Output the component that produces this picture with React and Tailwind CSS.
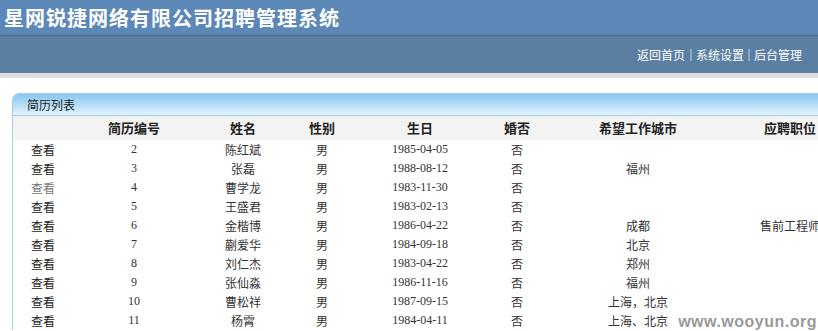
import React from 'react'

const rows = [
  ['2', '陈红斌', '男', '1985-04-05', '否', '', ''],
  ['3', '张磊', '男', '1988-08-12', '否', '福州', ''],
  ['4', '曹学龙', '男', '1983-11-30', '否', '', ''],
  ['5', '王盛君', '男', '1983-02-13', '否', '', ''],
  ['6', '金楷博', '男', '1986-04-22', '否', '成都', '售前工程师'],
  ['7', '蒯爱华', '男', '1984-09-18', '否', '北京', ''],
  ['8', '刘仁杰', '男', '1983-04-22', '否', '郑州', ''],
  ['9', '张仙淼', '男', '1986-11-16', '否', '福州', ''],
  ['10', '曹松祥', '男', '1987-09-15', '否', '上海，北京', ''],
  ['11', '杨霄', '男', '1984-04-11', '否', '上海、北京', ''],
]

const cjk = { fontFamily: '"Noto Sans CJK SC", "Noto Sans", sans-serif' }
const serif = { fontFamily: '"Liberation Serif", "Noto Sans CJK SC", serif' }

export default function App() {
  return (
    <div className="relative w-[818px] h-[331px] overflow-hidden bg-white" style={cjk}>
      {/* top title bar */}
      <div className="h-[35px] bg-[#5b88b6] flex items-center pl-[4px]">
        <h1 className="text-[20px] leading-none font-bold text-white tracking-[1px]">星网锐捷网络有限公司招聘管理系统</h1>
      </div>
      <div className="h-px bg-[#46688b]"></div>
      <div className="h-[37px] bg-[#5a7fa3] flex items-center justify-end pr-[16px] text-[12px] text-white">
        <a className="px-[1px]">返回首页</a>
        <span className="mx-[4px] w-[2px] h-[12px] bg-[#8fa9c4]"></span>
        <a>系统设置</a>
        <span className="mx-[4px] w-[2px] h-[12px] bg-[#8fa9c4]"></span>
        <a>后台管理</a>
      </div>
      <div className="h-[5px] bg-[#dedede]"></div>

      <div className="flex">
        <div className="w-[3px] h-[260px] bg-[#dedede]"></div>
        <div className="pt-[15px] pl-[12px]">
          <div className="w-[900px] border-l border-t border-[#a3d2e6] rounded-tl-[7px] overflow-hidden">
            <div className="h-[22px] bg-gradient-to-b from-[#86c6f0] to-[#e2f3fd] border-b border-[#9ccde3] flex items-center pl-[14px] text-[12px] text-[#222]">
              简历列表
            </div>
            <table className="table-fixed border-collapse text-[12px] text-[#333]">
              <colgroup>
                <col className="w-[60px]" />
                <col className="w-[122px]" />
                <col className="w-[96px]" />
                <col className="w-[62px]" />
                <col className="w-[134px]" />
                <col className="w-[60px]" />
                <col className="w-[182px]" />
                <col className="w-[122px]" />
              </colgroup>
              <thead>
                <tr className="h-[24px] bg-[#f3f3f3] text-[13px] font-bold text-[#222]">
                  <th></th>
                  <th>简历编号</th>
                  <th>姓名</th>
                  <th>性别</th>
                  <th>生日</th>
                  <th>婚否</th>
                  <th>希望工作城市</th>
                  <th>应聘职位</th>
                </tr>
              </thead>
              <tbody>
                {rows.map((r, i) => (
                  <tr key={r[0]} className="h-[19px] leading-[19px] text-center">
                    <td className={i === 2 ? 'text-[#777]' : 'text-[#222]'}>查看</td>
                    <td style={serif}>{r[0]}</td>
                    <td>{r[1]}</td>
                    <td>{r[2]}</td>
                    <td style={serif}>{r[3]}</td>
                    <td>{r[4]}</td>
                    <td>{r[5]}</td>
                    <td>{r[6]}</td>
                  </tr>
                ))}
              </tbody>
            </table>
          </div>
        </div>
      </div>

      <div className="absolute right-[1px] bottom-[1px] text-[16px] leading-none text-[#9a9a9a] font-bold tracking-[0.5px]" style={{ fontFamily: '"Liberation Sans", Arial, sans-serif' }}>
        www.wooyun.org
      </div>
    </div>
  )
}
